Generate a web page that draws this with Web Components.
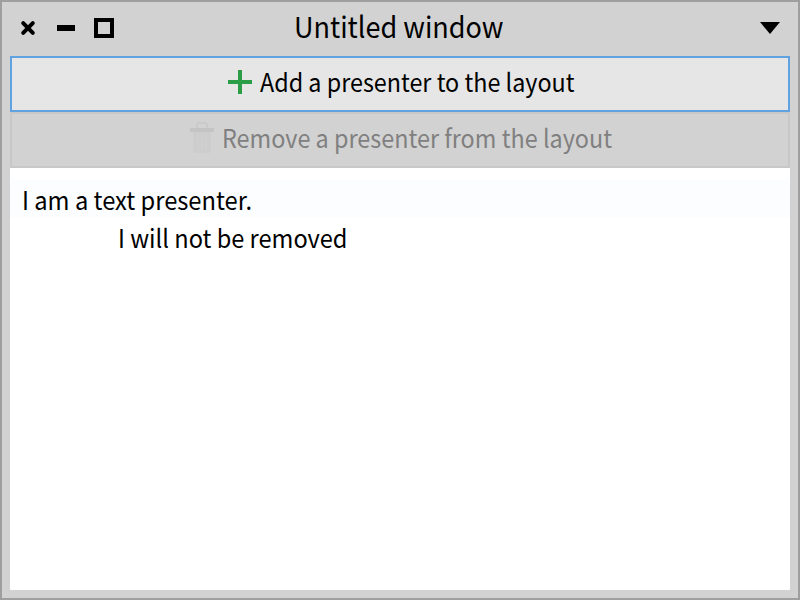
<!DOCTYPE html>
<html lang="en">
<head>
<meta charset="utf-8">
<title>Untitled window</title>
<style>
html, body { margin: 0; height: 100%; overflow: hidden; }
body { font-family: "Noto Sans CJK SC", "Noto Sans", sans-serif; color: #000; }
</style>
</head>
<body>
<app-window>
  <title-bar slot="title">Untitled window</title-bar>
  <push-button focused>
    <plus-icon slot="icon"></plus-icon><fit-text width="314.5">Add a presenter to the layout</fit-text>
  </push-button>
  <push-button disabled>
    <trash-icon slot="icon"></trash-icon><fit-text width="390">Remove a presenter from the layout</fit-text>
  </push-button>
  <text-area>
    <text-line current><fit-text width="230">I am a text presenter.</fit-text></text-line>
    <text-line indent><fit-text width="229.5">I will not be removed</fit-text></text-line>
  </text-area>
</app-window>
<script>
function define(name, html, connected) {
  const template = document.createElement('template');
  template.innerHTML = html;
  customElements.define(name, class extends HTMLElement {
    constructor() {
      super();
      this.attachShadow({ mode: 'open' }).append(template.content.cloneNode(true));
    }
    connectedCallback() { if (connected) connected(this); }
  });
}

define('app-window', `<style>
:host { box-sizing: border-box; display: flex; flex-direction: column; width: 800px; height: 600px;
  border: 2px solid #9f9f9f; background: #d2d2d2; padding: 0 8px 8px; }
main { flex: 1; display: flex; flex-direction: column; min-height: 0; }
</style><slot name="title"></slot><main><slot></slot></main>`);

define('title-bar', `<style>
:host { display: grid; grid-template-columns: 1fr auto 1fr; height: 54px; align-items: center; font-size: 29px; line-height: 46px; }
.controls { display: flex; padding-left: 8px; }
.menu { display: flex; justify-content: flex-end; padding-right: 8px; }
.title { padding: 0 3px 8px 0; white-space: nowrap; }
svg { display: block; }
</style>
<div class="controls"><svg width="100" height="54" viewBox="18 2 100 54">
<path d="M23.200 23.200 32.800 32.800M32.800 23.200 23.200 32.800" stroke="#000" stroke-width="4" stroke-linecap="round"/>
<path d="M57 25h18v6H57z"/><path d="M96 20h16v16H96z" fill="none" stroke="#000" stroke-width="4"/></svg></div>
<div class="title"><fit-text width="209.5"><slot></slot></fit-text></div>
<div class="menu"><svg width="24" height="54" viewBox="758 2 24 54"><path d="M760 22h20L770 34z"/></svg></div>`);

define('push-button', `<style>
:host { box-sizing: border-box; display: flex; flex: none; height: 56px; padding: 0 0 6px 1px; align-items: center; justify-content: center;
  gap: 8px; border: 2px solid #c8c8c8; font-size: 25px; line-height: 38px; white-space: nowrap; }
:host([focused]) { border-color: #61a2e0; background: #e6e6e6; padding-left: 1.5px; }
:host([disabled]) { color: #808080; background: #d2d2d2; }
::slotted([slot=icon]) { flex: none; margin-top: 2px; }
</style><slot name="icon"></slot><slot></slot>`);

define('plus-icon', `<style>:host { display: block; width: 24px; height: 24px; } svg { display: block; }</style>
<svg width="24" height="24"><path d="M10 0h4v10h10v4H14v10h-4V14H0v-4h10z" fill="#2b9d46"/></svg>`);

define('trash-icon', `<style>:host { display: block; width: 24px; height: 32px; } svg { display: block; }</style>
<svg width="24" height="32"><path d="M7 6V3.500Q7 1 9.500 1h5Q17 1 17 3.500V6" fill="none" stroke="#cacaca" stroke-width="2"/>
<path d="M0 6h24v4H0z" fill="#c4c4c4"/><path d="M3 10h18v18.500q0 2.500-2.500 2.500h-13Q3 31 3 28.500z" fill="#cdcdcd"/>
<path d="M8 12v16M12 12v16M16 12v16" stroke="#d0d0d0" stroke-width="1.500"/></svg>`);

define('text-area', `<style>
:host { box-sizing: border-box; display: block; flex: 1; background: #fff; padding-top: 12px; }
</style><slot></slot>`);

define('text-line', `<style>
:host { display: block; height: 38px; padding-left: 11.5px; font-size: 25px; line-height: 38px; white-space: pre; }
:host([current]) { background: #fbfdff; }
:host([indent]) { padding-left: 107.5px; }
</style><slot></slot>`);

/* Condenses its text horizontally so that the run fills the given width. */
define('fit-text', `<style>
:host { display: block; white-space: nowrap; }
span { display: inline-block; vertical-align: top; transform-origin: 0 0; }
</style><span><slot></slot></span>`, el => {
  const span = el.shadowRoot.querySelector('span');
  const target = Number(el.getAttribute('width'));
  const natural = span.getBoundingClientRect().width;
  el.style.width = target + 'px';
  if (natural) span.style.transform = 'scaleX(' + target / natural + ')';
});
</script>
</body>
</html>
